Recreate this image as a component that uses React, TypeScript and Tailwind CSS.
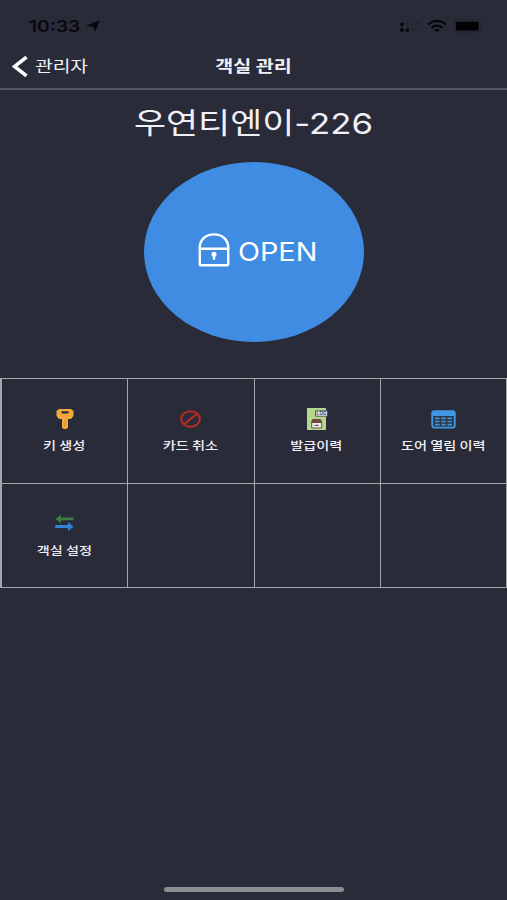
import React from "react";

interface MenuItem {
  id: string;
  label?: string;
  icon?: React.ReactNode;
}

const KeyIcon = () => (
  <svg width="18" height="20" viewBox="0 0 18 20">
    <path
      fillRule="evenodd"
      fill="#f2a93b"
      d="M3 0h12l2.5 2v5L15 10h-3v8.5L10.5 20h-3L6 18.5V10H3L.5 7V2L3 0Zm2.5 2.3v2.2h7V2.3h-7Z"
    />
    <path d="M9 11v7" stroke="#c98528" strokeWidth="0.8" />
  </svg>
);

const CancelIcon = () => (
  <svg width="21" height="18" viewBox="0 0 21 18" fill="none" stroke="#bd2a20" strokeWidth="2">
    <ellipse cx="10.5" cy="9" rx="9.3" ry="7.8" />
    <path d="M4.2 14.3 16.8 3.7" />
  </svg>
);

const LogIcon = () => (
  <svg width="21" height="22" viewBox="0 0 21 22">
    <path d="M0 0h19v22H0z" fill="#b3d98e" />
    <path d="M8.5 2.8h12v5.4h-12z" fill="#f1eff4" stroke="#4b4654" strokeWidth="0.9" />
    <text x="9.6" y="7.2" fontSize="4.6" fontWeight="700" fill="#3a3544" fontFamily="Liberation Sans, sans-serif">
      LOG
    </text>
    <path d="M5.3 12h8.4l1 2v6h-10v-6z" fill="#efe9ee" stroke="#5b4740" strokeWidth="0.9" />
    <path d="M5.5 11h8l1.2 4H4.3z" fill="#70483f" />
    <path d="M7.5 17.4h4" stroke="#5b5560" strokeWidth="1.2" />
  </svg>
);

const TableIcon = () => (
  <svg width="25" height="19" viewBox="0 0 25 19">
    <rect x="0.3" y="0.3" width="24.4" height="18.2" rx="3" fill="#4098e2" />
    <path d="M2.2 6h20.6v9.5q0 1.3-1.4 1.3H3.6q-1.4 0-1.4-1.3z" fill="#273750" />
    <g stroke="#4a91d0" strokeWidth="1.7">
      <path d="M4 8.4h4.6M10.2 8.4h4.6M16.4 8.4h4.6" />
      <path d="M4 11.5h4.6M10.2 11.5h4.6M16.4 11.5h4.6" />
      <path d="M4 14.6h4.6M10.2 14.6h4.6M16.4 14.6h4.6" />
    </g>
  </svg>
);

const SwapIcon = () => (
  <svg width="19" height="20" viewBox="0 0 19 20">
    <path d="M.5 5 6 .4v3.1h12.5v2.8H6v3z" fill="#3d7d40" />
    <path d="M18.5 12.5 13 8v3H.2v2.9H13v3.3z" fill="#3583d3" />
  </svg>
);

const LockIcon = () => (
  <svg width="32" height="34" viewBox="0 0 32 34" fill="none" stroke="white" strokeWidth="2.4">
    <path d="M1.8 15.8V14C1.8 6.8 7.8 1.4 16 1.4S30.2 6.8 30.2 14v1.8" />
    <path d="M1.8 15.8h28.4v15.1q0 1.3-1.3 1.3H3.1q-1.3 0-1.3-1.3z" />
    <circle cx="16" cy="21.2" r="2.5" fill="white" stroke="none" />
    <path d="M16 21v5.7" strokeWidth="2.4" />
  </svg>
);

const menuItems: MenuItem[] = [
  { id: "key", label: "키 생성", icon: <KeyIcon /> },
  { id: "cancel", label: "카드 취소", icon: <CancelIcon /> },
  { id: "issue", label: "발급이력", icon: <LogIcon /> },
  { id: "door", label: "도어 열림 이력", icon: <TableIcon /> },
  { id: "room", label: "객실 설정", icon: <SwapIcon /> },
  { id: "empty-1" },
  { id: "empty-2" },
  { id: "empty-3" },
];

const StatusBar = () => (
  <div className="flex h-[44px] items-center justify-between pt-[8px] pr-[21px] pl-[29px]">
    <div className="flex items-center">
      <span className="w-[57px] origin-left scale-x-[1.2] font-['Inter',sans-serif] text-base font-semibold text-[#08080c]">
        10:33
      </span>
      <svg width="14" height="12" viewBox="0 0 14 12" fill="#08080c">
        <path d="M14 0 9 12 7.2 7 0 5.6z" />
      </svg>
    </div>
    <div className="flex items-center">
      <svg width="21" height="14" viewBox="0 0 21 14" fill="#08080c">
        <circle cx="2" cy="5.4" r="2" />
        <circle cx="2" cy="10.9" r="2" />
        <circle cx="7.4" cy="10.9" r="2" />
        <g fill="#222330">
          <circle cx="7.4" cy="5.4" r="1.6" />
          <circle cx="12.8" cy="5.4" r="1.6" />
          <circle cx="12.8" cy="10.9" r="1.6" />
          <circle cx="18.2" cy="4" r="1.6" />
        </g>
      </svg>
      <svg className="ml-[6px]" width="20" height="14" viewBox="0 0 20 14" fill="none" stroke="#08080c">
        <path d="M1 5.6Q10-1.9 19 5.6" strokeWidth="2.2" />
        <path d="M4.4 8.8q5.6-4.4 11.2 0" strokeWidth="2.2" />
        <path d="m10 13-3-2.3q3-2 6 0z" fill="#08080c" stroke="none" />
      </svg>
      <svg className="ml-[7px]" width="32" height="14" viewBox="0 0 32 14">
        <rect x="0" y="1" width="26.5" height="12" rx="3" fill="none" stroke="#1f202c" />
        <rect x="1.8" y="2.8" width="22.8" height="8.6" rx="1.5" fill="#020204" />
        <path d="M28.5 4.5q2 2.5 0 5z" fill="#1f202c" />
      </svg>
    </div>
  </div>
);

const App = () => {
  return (
    <div className="flex h-[900px] w-[507px] flex-col overflow-hidden bg-[#2a2b39] font-['Noto_Sans_CJK_KR',sans-serif] text-[#f0f0f8]">
      <StatusBar />
      <header className="grid h-[46px] grid-cols-3 items-center border-b-2 border-[#555663]">
        <div className="flex items-center pl-[12px]">
          <svg width="16" height="21" viewBox="0 0 16 21" fill="none" stroke="white" strokeWidth="3.6">
            <path d="M14.5 1.2 2.5 10.5l12 9.3" />
          </svg>
          <span className="-mt-[2px] ml-[7px] origin-left scale-x-[1.2] text-base leading-6 whitespace-nowrap">
            관리자
          </span>
        </div>
        <h1 className="-mt-[2px] scale-x-[1.22] text-center text-base leading-6 font-bold whitespace-nowrap">객실 관리</h1>
      </header>

      <main className="flex flex-col items-center">
        <h2 className="mt-[14px] h-[40px] scale-x-[1.2] font-['Inter','Noto_Sans_CJK_KR',sans-serif] text-[29px] leading-[40px] whitespace-nowrap">
          우연티엔이-226
        </h2>
        <button className="mt-[18px] flex h-[180px] w-[220px] items-center rounded-[50%] bg-[#408ce2] pb-[4px] pl-[54px] text-white">
          <LockIcon />
          <span className="mt-[3px] ml-[8px] origin-left scale-x-[1.15] font-['Inter',sans-serif] text-[25px] leading-8">
            OPEN
          </span>
        </button>

        <div className="mt-[36px] grid h-[210px] w-full grid-cols-4 grid-rows-2 border-t border-l-2 border-[#a5a5ac]">
          {menuItems.map((item) => (
            <div key={item.id} className="flex flex-col items-center border-r border-b border-[#a5a5ac] pt-[29px]">
              {item.label && (
                <>
                  <div className="flex h-[22px] items-center justify-center">{item.icon}</div>
                  <span className="mt-[6px] mr-[1px] scale-x-[1.23] text-[11.5px] leading-[18px] font-medium whitespace-nowrap">
                    {item.label}
                  </span>
                </>
              )}
            </div>
          ))}
        </div>
      </main>

      <div className="mt-auto mb-[8px] h-[5px] w-[180px] self-center rounded-full bg-[#8b8c92]" />
    </div>
  );
};

export default App;
